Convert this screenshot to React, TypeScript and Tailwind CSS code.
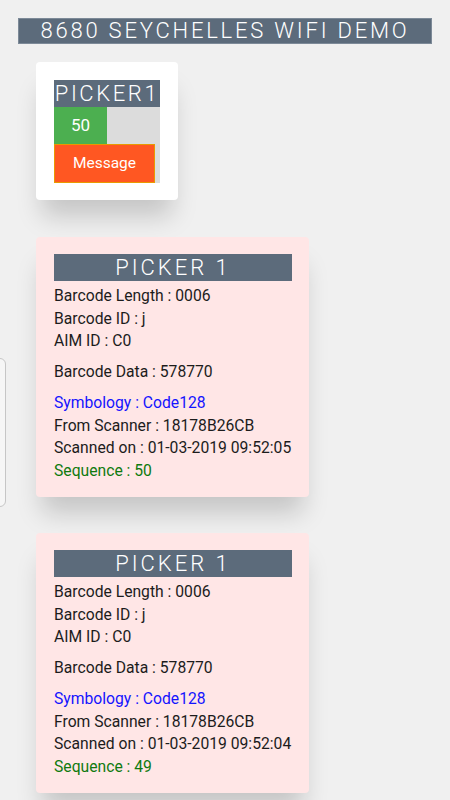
import React from 'react';

type Scan = {
  length: string;
  barcodeId: string;
  aimId: string;
  data: string;
  symbology: string;
  scanner: string;
  scannedOn: string;
  sequence: number;
};

const SCANS: Scan[] = [
  {
    length: '0006',
    barcodeId: 'j',
    aimId: 'C0',
    data: '578770',
    symbology: 'Code128',
    scanner: '18178B26CB',
    scannedOn: '01-03-2019 09:52:05',
    sequence: 50,
  },
  {
    length: '0006',
    barcodeId: 'j',
    aimId: 'C0',
    data: '578770',
    symbology: 'Code128',
    scanner: '18178B26CB',
    scannedOn: '01-03-2019 09:52:04',
    sequence: 49,
  },
];

const ScanCard: React.FC<{ scan: Scan }> = ({ scan }) => (
  <div className="ml-[36px] w-[273px] rounded-[4px] bg-[#ffe6e6] pt-[17px] pr-[17px] pb-[15px] pl-[18px] shadow-[0_22px_24px_-6px_rgba(0,0,0,0.18)]">
    <div className="h-[27px] bg-[#5c6b7b] text-center text-[22px] leading-[27px] font-light tracking-[3px] text-white">
      PICKER 1
    </div>
    <div className="mt-[4px] text-[15.7px] leading-[22.5px] text-[#1c1c1c]">
      <p>Barcode Length : {scan.length}</p>
      <p>Barcode ID : {scan.barcodeId}</p>
      <p>AIM ID : {scan.aimId}</p>
      <p className="my-[8.5px]">Barcode Data : {scan.data}</p>
      <p className="text-[#1414ff]">Symbology : {scan.symbology}</p>
      <p>From Scanner : {scan.scanner}</p>
      <p>Scanned on : {scan.scannedOn}</p>
      <p className="text-[#0f7a0f]">Sequence : {scan.sequence}</p>
    </div>
  </div>
);

export default function App() {
  const progress = 50;

  return (
    <div className="relative min-h-[800px] overflow-hidden bg-[#f0f0f0] pt-[18px] pb-[8px] font-['Roboto',sans-serif]">
      {/* Title */}
      <div className="mx-[18px] h-[26px] border border-[#7d8a98] bg-[#5c6b7b] text-center text-[22px] leading-[24px] font-light tracking-[2.8px] text-white">
        8680 SEYCHELLES WIFI DEMO
      </div>

      {/* Picker tile */}
      <div className="mt-[18px] ml-[36px] w-[142px] rounded-[4px] bg-white pt-[18px] pr-[18px] pb-[17px] pl-[18px] shadow-[0_22px_24px_-6px_rgba(0,0,0,0.18)]">
        <div className="w-[106px] bg-[#dcdcdc]">
          <div className="h-[27px] overflow-hidden bg-[#5c6b7b] text-center text-[22px] leading-[27px] font-light tracking-[2.6px] whitespace-nowrap text-white">
            PICKER1
          </div>
          <div className="h-[37px]">
            <div
              className="flex h-full items-center justify-center bg-[#4caf50] text-[17px] text-white"
              style={{ width: `${progress}%` }}
            >
              {progress}
            </div>
          </div>
          <button className="flex h-[39px] w-[101px] items-center justify-center border border-[#e89a00] bg-[#ff5722] text-[15.5px] text-white">
            Message
          </button>
        </div>
      </div>

      <div className="mt-[37px] flex flex-col gap-[36px]">
        {SCANS.map((s) => (
          <ScanCard key={s.sequence} scan={s} />
        ))}
      </div>

      {/* edge drawer handle */}
      <div className="absolute top-[358px] left-[-10px] h-[149px] w-[16px] rounded-[6px] border border-[#c6c6c6] bg-[#f6f6f6]" />
    </div>
  );
}
